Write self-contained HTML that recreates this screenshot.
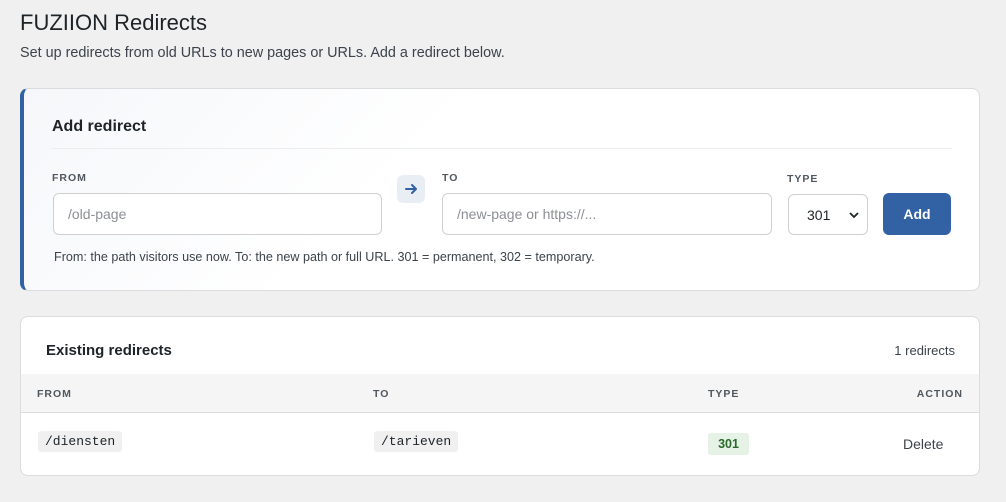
<!DOCTYPE html>
<html><head><style>
*{box-sizing:border-box;margin:0;padding:0}
body{width:1006px;height:502px;background:#f0f0f1;font-family:"Liberation Sans",sans-serif;color:#1d2327;position:relative;overflow:hidden}
.a{position:absolute}
h1{position:absolute;left:20px;top:10px;font-size:22px;font-weight:400;color:#1d2327}
.sub{left:20px;top:45px;font-size:14.4px;color:#3c434a}
.card{background:#fff;border:1px solid #dcdcde;border-radius:8px}
.lbl{font-size:10.5px;font-weight:700;letter-spacing:1px;color:#50575e}
.inp{border:1px solid #d0d0d3;border-radius:6px;background:#fff;font-size:14px;color:#8c8f94;padding-left:14px;line-height:40px;height:42px}
</style></head><body>
<h1>FUZIION Redirects</h1>
<div class="a sub">Set up redirects from old URLs to new pages or URLs. Add a redirect below.</div>

<div class="a card" style="left:20px;top:88px;width:960px;height:203px;border-left:4px solid #3262a3;background:linear-gradient(135deg,#f5f7fa,#fff 40%)">
  <div class="a" style="left:28px;top:29px;font-size:16px;font-weight:700">Add redirect</div>
  <div class="a" style="left:28px;top:59px;width:900px;height:1px;background:#ebecee"></div>
  <div class="a lbl" style="left:28px;top:83px">FROM</div>
  <div class="a inp" style="left:29px;top:104px;width:329px">/old-page</div>
  <div class="a" style="left:373px;top:86px;width:28px;height:28px;background:#e9eef5;border-radius:6px"><svg class="a" style="left:7px;top:7px" width="14" height="14" viewBox="0 0 14 14"><path d="M2 7H12M8 3L12 7L8 11" stroke="#3262a3" stroke-width="2" fill="none" stroke-linecap="round" stroke-linejoin="round"/></svg></div>
  <div class="a lbl" style="left:418px;top:83px">TO</div>
  <div class="a inp" style="left:418px;top:104px;width:330px">/new-page or https://...</div>
  <div class="a lbl" style="left:763px;top:84px">TYPE</div>
  <div class="a inp" style="left:764px;top:105px;width:80px;height:41px;color:#1d2327;padding-left:18px">301<svg class="a" style="right:8px;top:16px" width="10" height="8" viewBox="0 0 10 8"><path d="M1 2L5 6L9 2" stroke="#1d2327" stroke-width="1.8" fill="none"/></svg></div>
  <div class="a" style="left:859px;top:104px;width:68px;height:42px;background:#3262a3;border-radius:6px;color:#fff;font-size:14px;font-weight:700;text-align:center;line-height:42px">Add</div>
  <div class="a" style="left:30px;top:161px;font-size:12.6px;color:#3c434a">From: the path visitors use now. To: the new path or full URL. 301 = permanent, 302 = temporary.</div>
</div>

<div class="a card" style="left:20px;top:316px;width:960px;height:160px;overflow:hidden">
  <div class="a" style="left:25px;top:25px;font-size:15px;font-weight:700">Existing redirects</div>
  <div class="a" style="right:24px;top:26px;font-size:13px;color:#3c434a">1 redirects</div>
  <div class="a" style="left:0;top:57px;width:960px;height:39px;background:#f4f5f4;border-bottom:1px solid #dcdcde"></div>
  <div class="a lbl" style="left:16px;top:71px">FROM</div>
  <div class="a lbl" style="left:352px;top:71px">TO</div>
  <div class="a lbl" style="left:687px;top:71px">TYPE</div>
  <div class="a lbl" style="right:16px;top:71px">ACTION</div>
  <div class="a" style="left:17px;top:114px;background:#f0f0f1;border-radius:3px;padding:3px 7px;font-family:'Liberation Mono',monospace;font-size:13px">/diensten</div>
  <div class="a" style="left:353px;top:114px;background:#f0f0f1;border-radius:3px;padding:3px 7px;font-family:'Liberation Mono',monospace;font-size:13px">/tarieven</div>
  <div class="a" style="left:687px;top:116px;width:41px;height:22px;background:#e6f2e6;border-radius:3px;color:#2a6b2a;font-size:12.5px;font-weight:700;text-align:center;line-height:22px">301</div>
  <div class="a" style="left:882px;top:119px;font-size:14px;color:#3c434a">Delete</div>
</div>
</body></html>
